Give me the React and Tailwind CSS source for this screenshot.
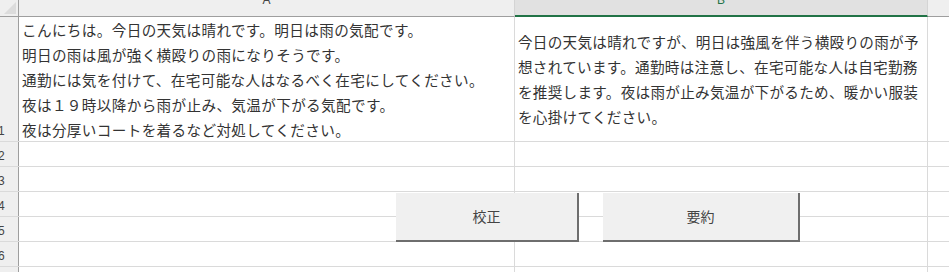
const linesA = [
  "こんにちは。今日の天気は晴れです。明日は雨の気配です。",
  "明日の雨は風が強く横殴りの雨になりそうです。",
  "通勤には気を付けて、在宅可能な人はなるべく在宅にしてください。",
  "夜は１９時以降から雨が止み、気温が下がる気配です。",
  "夜は分厚いコートを着るなど対処してください。",
];

const linesB = [
  "今日の天気は晴れですが、明日は強風を伴う横殴りの雨が予",
  "想されています。通勤時は注意し、在宅可能な人は自宅勤務",
  "を推奨します。夜は雨が止み気温が下がるため、暖かい服装",
  "を心掛けてください。",
];

function RowHead({ n }) {
  return (
    <div className="w-[19px] shrink-0 bg-[#efefef] border-r border-[#9e9e9e] flex items-end overflow-hidden">
      <span className="ml-[-2px] mb-[2px] text-[12px] leading-[16px] text-[#444] font-['Liberation_Sans',sans-serif]">
        {n}
      </span>
    </div>
  );
}

function Row({ n }) {
  return (
    <div className="flex h-[25px] border-b border-[#dadada]">
      <RowHead n={n} />
      <div className="w-[496px] shrink-0 border-r border-[#dadada]" />
      <div className="w-[413px] shrink-0 border-r border-[#dadada]" />
      <div className="flex-1" />
    </div>
  );
}

function SheetButton({ label, className }) {
  return (
    <div
      className={
        "absolute h-[49px] bg-[#f0f0f0] border-r-2 border-b-2 border-[#6e6e6e] flex items-center justify-center text-[14px] text-[#444] " +
        className
      }
    >
      {label}
    </div>
  );
}

export default function App() {
  return (
    <div className="relative w-[949px] h-[272px] overflow-hidden bg-white font-['Noto_Sans_CJK_JP',sans-serif]">
      {/* column headers */}
      <div className="flex h-[17px]">
        <div className="w-[19px] shrink-0 bg-[#efefef] border-r border-b border-[#9e9e9e] relative overflow-hidden">
          <div className="absolute right-[2px] bottom-[2px] w-0 h-0 border-l-[12px] border-l-transparent border-b-[12px] border-b-[#dcdcdc]" />
        </div>
        <div className="w-[496px] shrink-0 bg-[#efefef] border-r border-b border-r-[#d4d4d4] border-b-[#9e9e9e] flex justify-center overflow-hidden">
          <span className="mt-[-8px] text-[12px] leading-[17px] text-[#444] font-['Liberation_Sans',sans-serif]">
            A
          </span>
        </div>
        <div className="w-[413px] shrink-0 bg-[#e1e1e1] border-r border-r-[#d4d4d4] border-b-2 border-b-[#217346] flex justify-center overflow-hidden">
          <span className="mt-[-8px] text-[12px] leading-[17px] text-[#217346] font-['Liberation_Sans',sans-serif]">
            B
          </span>
        </div>
        <div className="flex-1 bg-[#efefef] border-b border-[#9e9e9e]" />
      </div>

      {/* row 1 */}
      <div className="flex h-[125px] border-b border-[#dadada]">
        <RowHead n="1" />
        <div className="w-[496px] shrink-0 border-r border-[#dadada] pl-[3px] text-[14.6px] leading-[25px] tracking-[0.36px] text-[#333] whitespace-nowrap overflow-hidden">
          {linesA.map((l) => (
            <div key={l}>{l}</div>
          ))}
        </div>
        <div className="w-[413px] shrink-0 border-r border-[#dadada] pl-[3px] flex flex-col justify-center text-[14.6px] leading-[25px] tracking-[0.28px] text-[#333] whitespace-nowrap overflow-hidden">
          {linesB.map((l) => (
            <div key={l}>{l}</div>
          ))}
        </div>
        <div className="flex-1" />
      </div>

      {[2, 3, 4, 5, 6, 7].map((n) => (
        <Row key={n} n={n} />
      ))}

      <SheetButton label="校正" className="left-[396px] top-[193px] w-[183px]" />
      <SheetButton label="要約" className="left-[603px] top-[193px] w-[197px]" />
    </div>
  );
}
